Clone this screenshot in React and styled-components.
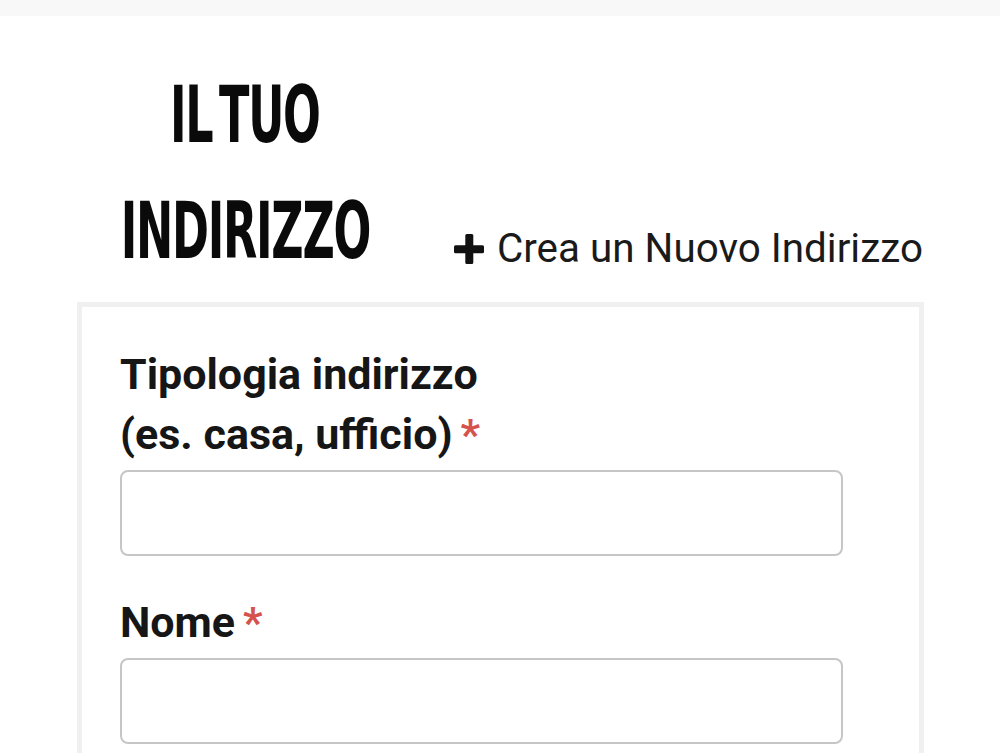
import React from 'react';
import styled, { createGlobalStyle } from 'styled-components';

const GlobalStyle = createGlobalStyle`
    body {
        margin: 0;
        background-color: #ffffff;
        font-family: Roboto, 'Liberation Sans', sans-serif;
        color: #1c1c1c;
    }
`;

const TopBar = styled.div`
    height: 16px;
    background-color: #f8f8f8;
`;

const Page = styled.div`
    padding: 41px 76px 0 77px;
`;

const Header = styled.div`
    display: flex;
    align-items: flex-end;
    margin-bottom: 13px;
`;

const Title = styled.h1`
    display: flex;
    flex-direction: column;
    align-items: center;
    width: 336px;
    margin: 0;
    font-family: 'DejaVu Sans Condensed', 'DejaVu Sans', sans-serif;
    font-weight: bold;
    font-size: 78px;
    line-height: 116px;
    color: #0a0a0a;
`;

const TitleLine = styled.span`
    display: inline-block;
    white-space: nowrap;
    letter-spacing: -2px;
    word-spacing: -12px;
    transform: scaleX(0.635);
`;

const NewAddress = styled.a`
    display: flex;
    align-items: center;
    gap: 12px;
    margin: 0 0 17px 40px;
    font-size: 40.4px;
    color: #1a1a1a;
    text-decoration: none;
    white-space: nowrap;
`;

const Card = styled.div`
    border: 5px solid #f0f0f0;
    border-bottom: none;
    padding: 37px 76px 40px 38px;
`;

const Field = styled.div`
    margin-bottom: 36px;
`;

const Label = styled.label`
    display: block;
    font-size: 43px;
    font-weight: bold;
    line-height: 60px;
    color: #161616;
    margin-bottom: 6px;
`;

const Required = styled.span`
    color: #d6524c;
    margin-left: 8px;
`;

const Input = styled.input`
    display: block;
    box-sizing: border-box;
    width: 723px;
    height: 86px;
    border: 2px solid #c6c6c6;
    border-radius: 8px;
    background: #ffffff;
    font-size: 30px;
    padding: 0 16px;
    outline: none;
`;

const PlusIcon = () => (
    <svg width="32" height="32" viewBox="0 0 32 32">
        <rect x="12.3" y="1" width="8" height="30" rx="1.5" fill="#111" />
        <rect x="1" y="12.3" width="30" height="8" rx="1.5" fill="#111" />
    </svg>
);

const App = () => {
    return (
        <>
            <GlobalStyle />
            <TopBar />
            <Page>
                <Header>
                    <Title>
                        <TitleLine>IL TUO</TitleLine>
                        <TitleLine>INDIRIZZO</TitleLine>
                    </Title>
                    <NewAddress href="#">
                        <PlusIcon />
                        Crea un Nuovo Indirizzo
                    </NewAddress>
                </Header>
                <Card>
                    <Field>
                        <Label>
                            Tipologia indirizzo
                            <br />
                            (es. casa, ufficio)<Required>*</Required>
                        </Label>
                        <Input type="text" />
                    </Field>
                    <Field>
                        <Label>
                            Nome<Required>*</Required>
                        </Label>
                        <Input type="text" />
                    </Field>
                </Card>
            </Page>
        </>
    );
};

export default App;
